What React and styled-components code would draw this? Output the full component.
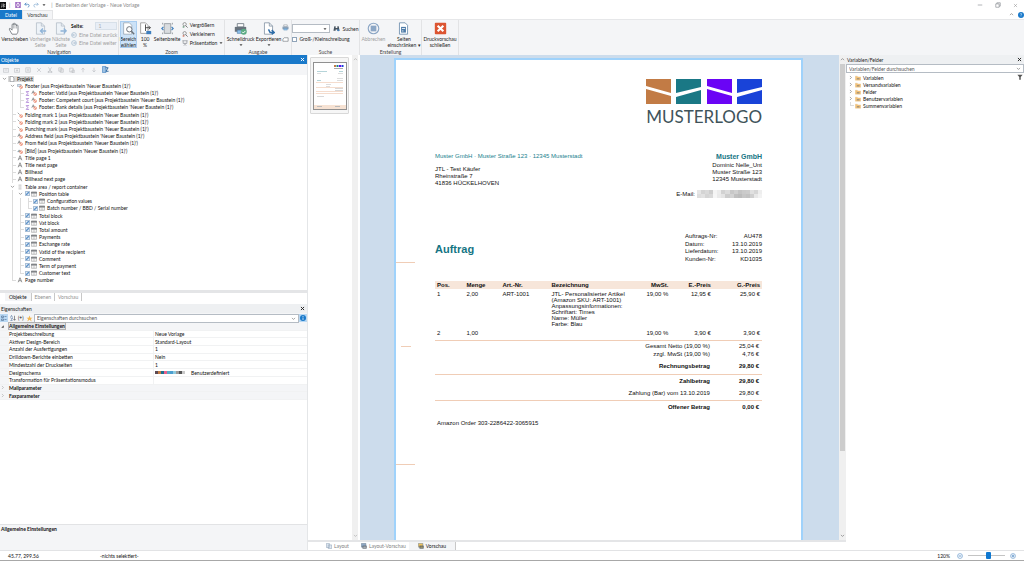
import React from "react";
import styled, { createGlobalStyle } from "styled-components";

const GlobalStyle = createGlobalStyle`
  * {
    box-sizing: border-box;
  }
  body {
    margin: 0;
    background: #ffffff;
    color: #111111;
    font-family: Lato, "Open Sans", sans-serif;
    font-size: 5px;
    line-height: 6px;
  }
  button, input, select {
    font: inherit;
    color: inherit;
    margin: 0;
    padding: 0;
    border: 0;
    background: none;
    border-radius: 0;
  }
  ul {
    list-style: none;
    margin: 0;
    padding: 0;
  }
  svg {
    display: block;
    flex: none;
  }
`;

const Window = styled.div`
  height: 100vh;
  display: flex;
  flex-direction: column;
  overflow: hidden;
`;

const TitleBar = styled.header`
  height: 10px;
  display: flex;
  align-items: center;
  gap: 3px;
  color: #8a8a8a;
`;

const QuickAccess = styled.div`
  display: flex;
  align-items: center;
  gap: 3px;
  padding: 0 2px;
`;

const IconButton = styled.button`
  display: flex;
  align-items: center;
  justify-content: center;
  opacity: ${(p) => (p.disabled ? 0.5 : 1)};
`;

const Spacer = styled.div`
  flex: 1;
`;

const WindowButtons = styled.div`
  display: flex;
  gap: 12px;
  padding-right: 6px;
`;

const TabBar = styled.nav`
  height: 9px;
  display: flex;
  align-items: stretch;
`;

const RibbonTab = styled.button`
  width: ${(p) => (p.$file ? 22 : 31)}px;
  color: ${(p) => (p.$file ? "#ffffff" : "#333333")};
  background: ${(p) => (p.$file ? "#1979ca" : "#f4f5f7")};
  border: ${(p) => (p.$file ? "0" : "1px solid #e3e4e6")};
  border-bottom: 0;
`;

const TabTools = styled.div`
  display: flex;
  align-items: center;
  gap: 4px;
`;

const Ribbon = styled.div`
  height: 36px;
  flex: none;
  display: flex;
  background: #f4f5f7;
  border-top: 1px solid #e6e7e9;
`;

const Group = styled.section`
  width: ${(p) => p.$width}px;
  display: flex;
  flex-direction: column;
  justify-content: space-between;
  border-right: 1px solid #e2e3e5;
`;

const GroupBody = styled.div`
  display: flex;
  justify-content: center;
  padding-top: 1px;
  gap: 1px;
`;

const GroupLabel = styled.div`
  text-align: center;
  color: #444444;
`;

const BigButton = styled.button`
  min-width: ${(p) => p.$width}px;
  height: 27px;
  display: flex;
  flex-direction: column;
  align-items: center;
  gap: 1px;
  padding-top: 1px;
  white-space: pre;
  text-align: center;
  color: ${(p) => (p.disabled ? "#a0a0a0" : "#222222")};
  background: ${(p) => (p.$active ? "#cce2f7" : "none")};
  outline: ${(p) => (p.$active ? "1px solid #a9cdf0" : "none")};
  outline-offset: -1px;
`;

const Stack = styled.div`
  display: flex;
  flex-direction: column;
  gap: ${(p) => p.$gap || 3}px;
  padding-top: ${(p) => p.$top || 0}px;
`;

const SmallButton = styled.button`
  display: flex;
  align-items: center;
  gap: 2px;
  white-space: nowrap;
  color: ${(p) => (p.disabled ? "#a0a0a0" : "#222222")};
`;

const Field = styled.label`
  display: flex;
  align-items: center;
  justify-content: space-between;
  font-weight: ${(p) => (p.$strong ? 700 : 400)};
  gap: 3px;
`;

const PageSelect = styled.select`
  width: 22px;
  height: 8px;
  appearance: none;
  padding-left: 2px;
  color: #8a8a8a;
  font-weight: 400;
  background: #e3ecf6;
  border: 1px solid #ccd8e4;
`;

const SearchCombo = styled.div`
  width: ${(p) => (p.$wide ? "100%" : "38px")};
  height: 9px;
  flex: ${(p) => (p.$wide ? "1" : "none")};
  display: flex;
  align-items: center;
  background: #ffffff;
  border: 1px solid #b5bcc4;
  padding: 0 2px;

  input {
    width: 100%;
    min-width: 0;
    height: 7px;
    outline: none;
  }
  input::placeholder {
    color: #555555;
    opacity: 1;
  }
`;

const Check = styled.input.attrs({ type: "checkbox" })`
  appearance: none;
  width: 5px;
  height: 5px;
  flex: none;
  border: 1px solid #8fa3b8;
  background: #ffffff;

  &:checked {
    border-color: #a9bfd6;
    background: linear-gradient(135deg, #ffffff 10%, #5d93ca 50%, #ffffff 90%);
  }
`;

const Workspace = styled.main`
  flex: 1;
  min-height: 0;
  display: grid;
  grid-template-columns: 154fr 269fr 89fr;
`;

const SidePanel = styled.aside`
  display: flex;
  flex-direction: column;
  min-width: 0;
  min-height: 0;
  border-right: ${(p) => (p.$last ? "0" : "1px solid #e4e6e8")};
`;

const PanelHeader = styled.div`
  height: 9px;
  flex: none;
  display: flex;
  align-items: center;
  justify-content: space-between;
  padding: 0 2px 0 1px;
  color: ${(p) => (p.$active ? "#ffffff" : "#222222")};
  background: ${(p) => (p.$active ? "#1979ca" : "#eef0f2")};
`;

const Toolbar = styled.div`
  height: 11px;
  flex: none;
  display: flex;
  align-items: center;
  gap: 5px;
  padding-left: 3px;
  background: #f4f5f7;
`;

const Tree = styled.ul`
  height: 209px;
  display: grid;
  grid-auto-rows: 1fr;
`;

const FieldTree = styled.ul`
  display: grid;
  flex: 1;
  grid-auto-rows: 7px;
  align-content: start;
  padding-top: 1px;
`;

const FilterButton = styled(IconButton)`
  align-self: flex-start;
  height: 8px;
  padding-right: 1px;
`;

const TreeRow = styled.li`
  display: flex;
  align-items: center;
  padding-left: ${(p) => (p.$root ? 0 : 8)}px;
  white-space: nowrap;
`;

const TreeLabel = styled.label`
  display: flex;
  align-items: center;
  gap: 2px;
  padding: 0 1px;
  background: ${(p) => (p.$selected ? "#d9d9d9" : "none")};
`;

const TreeIcons = styled.span`
  display: flex;
  align-items: center;
  gap: 1px;
`;

const Guide = styled.span`
  width: 8px;
  align-self: stretch;
  flex: none;
  display: grid;
  place-items: center;
  background-image: ${(p) =>
    p.$kind === "v"
      ? "none"
      : "linear-gradient(#dcdcdc, #dcdcdc), linear-gradient(#dcdcdc, #dcdcdc)"};
  background-repeat: no-repeat;
  background-position: 4px 0, 4px 50%;
  background-size: 1px ${(p) => (p.$kind === "L" ? "50%" : "100%")},
    ${(p) => (p.$kind === "|" ? 0 : 4)}px 1px;
`;

const Splitter = styled.div`
  height: 3px;
  flex: none;
  background: #e4e5e7;
`;

const PanelTabs = styled.div`
  height: 11px;
  flex: none;
  display: flex;
  align-items: flex-start;
  padding-left: 5px;
`;

const PanelTab = styled.button`
  height: 8px;
  padding: 0 ${(p) => (p.$active ? 4 : 3)}px;
  color: ${(p) => (p.$active ? "#111111" : "#8f8f8f")};
  background: ${(p) => (p.$active ? "#f4f5f7" : "none")};
  border-right: 1px solid #c8c8c8;
`;

const SearchRow = styled.div`
  height: ${(p) => (p.$tall ? 10 : 9)}px;
  flex: none;
  display: flex;
  align-items: center;
  background: #f4f5f7;
`;

const SearchTools = styled.div`
  width: 34px;
  display: flex;
  align-items: center;
  gap: 2px;
`;

const PropertyArea = styled.div`
  height: 246px;
  flex: none;
  display: flex;
  flex-direction: column;
`;

const PropertyTable = styled.table`
  width: 100%;
  height: 77px;
  flex: none;
  border-collapse: collapse;

  th, td {
    padding: 0;
    text-align: left;
    font-weight: 400;
    border-bottom: 1px solid #f1f2f3;
    line-height: 6px;
  }
  th:first-child {
    width: 9px;
    background: #f4f5f7;
  }
  td {
    width: 50%;
    padding-left: 1px;
    border-left: 1px solid #f1f2f3;
  }
`;

const CategoryRow = styled.tr`
  background: #f4f5f7;

  && th {
    font-weight: 700;
  }
  span {
    outline: ${(p) => (p.$selected ? "1px solid #b0b0b0" : "none")};
    background: ${(p) => (p.$selected ? "#e1e3e5" : "none")};
  }
`;

const Scheme = styled.span`
  display: flex;
  align-items: center;
  gap: 6px;
`;

const Swatches = styled.span`
  display: flex;
`;

const Swatch = styled.i`
  width: 3px;
  height: 3px;
  background: ${(p) => p.$color};
`;

const Description = styled.div`
  height: 26px;
  flex: none;
  padding: 1px;
  font-weight: 700;
  background: #f4f5f7;
  border-top: 1px solid #e2e3e5;
`;

const Center = styled.section`
  display: flex;
  flex-direction: column;
  min-width: 0;
  min-height: 0;
`;

const Preview = styled.div`
  flex: 1;
  min-height: 0;
  display: flex;
  overflow: hidden;
`;

const Thumbnails = styled.div`
  width: 44px;
  padding: 2px 2px 0 2px;
`;

const Thumbnail = styled.button`
  width: 39px;
  height: 57px;
  display: grid;
  place-items: center;
  background: #f6f6f6;
  border: 1px solid #d8d8d8;
  border-radius: 1px;
`;

const ScrollTrack = styled.div`
  width: ${(p) => (p.$wide ? 7 : 6)}px;
  flex: none;
  display: flex;
  flex-direction: column;
  align-items: center;
  gap: 2px;
  padding: 2px 1px;
  background: #f0f0f0;
`;

const ScrollThumb = styled.div`
  flex: 1;
  width: 100%;
  background: ${(p) => (p.$shown ? "#cdcdcd" : "transparent")};
  margin-bottom: ${(p) => (p.$shown ? "80px" : "0")};
`;

const Canvas = styled.div`
  flex: 1;
  margin-left: 2px;
  padding: 3px 36px 0 34px;
  background: #ccdcec;
  display: flex;
`;

const Paper = styled.article`
  flex: 1;
  display: flex;
  background: #ffffff;
  border: 2px solid #9fd2fb;
  border-bottom: 0;
  padding-right: 39px;
  font-family: "Liberation Sans", Arial, sans-serif;
  font-size: 6px;
  line-height: 7px;
`;

const MarginMarks = styled.div`
  width: 39px;
  flex: none;
  padding-top: 202px;
`;

const Mark = styled.div`
  width: ${(p) => (p.$short ? 10 : 19)}px;
  height: 1px;
  margin: 0 0 ${(p) => p.$space || 0}px ${(p) => (p.$short ? 5 : 0)}px;
  background: #f0cdb6;
`;

const Sheet = styled.div`
  flex: 1;
  min-width: 0;
  padding-top: 19px;
`;

const Logo = styled.div`
  display: flex;
  flex-direction: column;
  align-items: flex-end;
  gap: 4px;
  font-family: Lato, sans-serif;
  font-size: 17px;
  line-height: 17px;
  color: #40535a;
`;

const Columns = styled.div`
  display: flex;
  justify-content: space-between;
  margin-top: ${(p) => p.$top}px;
`;

const Address = styled.address`
  font-style: normal;
  text-align: ${(p) => (p.$right ? "right" : "left")};
`;

const Sender = styled.div`
  color: #1a7f8e;
  margin-bottom: 6px;
`;

const Company = styled.div`
  margin-bottom: 1px;
  font-size: 7px;
  font-weight: 700;
  line-height: 8px;
  color: #157584;
`;

const Mail = styled.div`
  display: flex;
  align-items: center;
  justify-content: flex-end;
  gap: 2px;
  margin-top: 7px;
`;

const Redacted = styled.span`
  width: 65px;
  height: 8px;
  display: grid;
  grid-template-columns: repeat(16, 1fr);
`;

const Pixel = styled.i`
  background: ${(p) => p.$color};
`;

const DocTitle = styled.h1`
  margin: 0;
  padding-top: 10px;
  font-size: 11px;
  line-height: 13px;
  color: #157584;
`;

const Meta = styled.dl`
  width: 77px;
  margin: 0;
  display: grid;
  grid-template-columns: 1fr auto;
  grid-template-rows: repeat(4, 1fr);
  height: 30px;

  dd {
    margin: 0;
    text-align: right;
  }
`;

const Items = styled.table`
  width: 100%;
  margin-top: 18px;
  border-collapse: collapse;
  table-layout: fixed;
  border-bottom: 1px solid #f0cdb6;
  line-height: 6px;

  th, td {
    padding: 1px 2px;
    text-align: left;
    vertical-align: top;
    white-space: pre;
  }
  th {
    background: #f7e6da;
  }
  th:nth-child(n + 5), td:nth-child(n + 5) {
    text-align: right;
  }
  td {
    padding-top: 2px;
  }
  tbody tr:last-child td {
    padding-bottom: 4px;
  }
  th:nth-child(1) { width: 9%; }
  th:nth-child(2) { width: 11%; }
  th:nth-child(3) { width: 15%; }
  th:nth-child(4) { width: 23%; }
  th:nth-child(5) { width: 14%; }
  th:nth-child(6) { width: 13%; }
`;

const Totals = styled.table`
  width: 100%;
  border-spacing: 0;
  border-bottom: ${(p) => (p.$last ? "0" : "1px solid #f0cdb6")};

  td {
    height: 8px;
    padding: 0 3px 0 0;
    text-align: right;
  }
  td:last-child {
    width: 15%;
  }
  tr.net td {
    height: 9px;
    vertical-align: bottom;
  }
  tr.sum td {
    height: ${(p) => p.$sum}px;
    font-weight: 700;
  }
  tr.payment td {
    height: 12px;
    padding-top: 2px;
    vertical-align: top;
  }
`;

const Note = styled.p`
  margin: 6px 2px;
`;

const ViewTabs = styled.div`
  height: 10px;
  flex: none;
  display: flex;
  align-items: stretch;
  padding: 0 0 0 15px;
  border-top: 2px solid #e4e5e7;
`;

const ViewTab = styled.button`
  display: flex;
  align-items: center;
  gap: 2px;
  padding: 0 ${(p) => (p.$active ? 9 : 3)}px;
  margin-right: ${(p) => (p.$wide ? 6 : 0)}px;
  color: ${(p) => (p.$active ? "#111111" : "#808080")};
  background: ${(p) => (p.$active ? "#f4f5f7" : "none")};
  border-right: ${(p) => (p.$active ? "1px solid #c8c8c8" : "0")};
`;

const StatusBar = styled.footer`
  height: 11px;
  flex: none;
  display: flex;
  align-items: center;
  border-top: 1px solid #e2e3e5;
  border-bottom: 1px solid #a8a8a8;
`;

const StatusText = styled.div`
  width: ${(p) => p.$width}px;
  padding-left: 8px;
`;

const Zoom = styled.label`
  display: flex;
  align-items: center;
  gap: 5px;
  padding-right: 8px;

  span {
    padding-right: 2px;
  }
`;

const ZoomSlider = styled.input.attrs({ type: "range" })`
  appearance: none;
  width: 37px;
  height: 7px;

  &::-webkit-slider-runnable-track {
    height: 1px;
    background: #c4c4c4;
  }
  &::-webkit-slider-thumb {
    appearance: none;
    width: 5px;
    height: 7px;
    margin-top: -3px;
    background: #0f78d0;
    border-radius: 1px;
  }
`;

const Svg = ({ size = 6, width, children, box = 16 }) => (
  <svg
    width={width || size}
    height={size}
    viewBox={`0 0 ${box} ${box}`}
    fill="none"
    stroke="#6b7178"
    strokeWidth="1.4"
    aria-hidden="true"
  >
    {children}
  </svg>
);

const Chevron = ({ dir = "down", color = "#707070" }) => {
  const paths = { down: "M3 6l5 5 5-5", up: "M3 10l5-5 5 5", right: "M6 3l5 5-5 5" };
  return (
    <Svg size={5}>
      <path d={paths[dir]} stroke={color} strokeWidth="2" />
    </Svg>
  );
};

const Caret = () => (
  <Svg size={4}>
    <path d="M2 5h12l-6 7z" fill="#444" stroke="none" />
  </Svg>
);

const Cross = ({ color = "#222", size = 5, bold = 3 }) => (
  <Svg size={size}>
    <path d="M3 3l10 10M13 3L3 13" stroke={color} strokeWidth={bold} />
  </Svg>
);

const Hand = () => (
  <Svg size={13}>
    <path
      d="M5 15L2 10c-1-2 0-3 1.500-1.500L5 10V3.500c0-1.300 1.600-1.300 1.600 0V2.500c0-1.500 1.900-1.500 1.900 0v1c0-1.500 1.900-1.400 1.900 0v1.200c0-1.300 1.900-1.200 1.900 0V11c0 2-1 3-1.500 4z"
      fill="#fff"
      strokeWidth="1"
    />
    <path d="M6.600 3.500V8M8.500 3v5M10.400 4v4" strokeWidth=".6" />
  </Svg>
);

const PageIcon = ({ arrow = "left", dim }) => (
  <Svg size={13}>
    <g opacity={dim ? 0.55 : 1}>
      <path d="M3 1h6l4 4v10H3z" fill={dim ? "#eaf2fa" : "#fff"} stroke="#8494a4" strokeWidth="1" />
      <path d="M9 1v4h4" stroke="#8494a4" strokeWidth="1" />
      {arrow === "left" && <path d="M15 11H8m3-3l-3 3 3 3" stroke="#3f7fbe" strokeWidth="1.700" />}
      {arrow === "right" && <path d="M8 11h7m-3-3l3 3-3 3" stroke="#3f7fbe" strokeWidth="1.700" />}
      {arrow === "export" && <path d="M8 9l2 4h5m-3-3l3 3-3 2" stroke="#2e6da8" strokeWidth="1.800" />}
    </g>
  </Svg>
);

const Magnifier = ({ size = 6, stroke = "#555", sign }) => (
  <Svg size={size}>
    <circle cx="7" cy="6" r="4.500" stroke={stroke} />
    <path d="M10 10l5 5" stroke={stroke} strokeWidth="2" />
    {sign && <circle cx="4" cy="13" r="2.500" fill={sign} stroke="none" />}
  </Svg>
);

const AreaIcon = () => (
  <Svg size={13}>
    <path d="M2 1h7l3 3v11H2z" fill="#fff" stroke="#8a98a5" strokeWidth=".8" />
    <circle cx="9" cy="9" r="3.300" fill="#fff" strokeWidth="1.200" />
    <path d="M11.500 11.500L15 15" strokeWidth="1.800" />
  </Svg>
);

const HundredIcon = () => (
  <Svg size={13}>
    <path d="M2 1h6l3 3v10H2z" fill="#fff" stroke="#888" strokeWidth=".9" />
    <path d="M8 7h6m-2-2l2 2-2 2M8 3v8" stroke="#333" strokeWidth="1" />
    <path d="M9 11h6v4H9z" fill="#3f7fbe" stroke="none" />
  </Svg>
);

const WidthIcon = () => (
  <Svg size={13}>
    <path d="M4 2h8v12H4z" fill="#d9dcdf" stroke="#90969c" strokeWidth="1" />
    <path d="M3 6L1 8l2 2M13 6l2 2-2 2" stroke="#3f7fbe" strokeWidth="1.500" />
    <path d="M2 1v2M14 1v2M2 13v2M14 13v2" strokeWidth=".8" />
  </Svg>
);

const PrinterIcon = ({ size = 13, check, light }) => (
  <Svg size={size}>
    <path d="M4 2h8v4H4z" fill="#fff" stroke="#68727c" strokeWidth="1" />
    <path d="M1 6h14v6H1z" fill={light ? "#8fa3b8" : "#68727c"} stroke="none" />
    <path d="M4 10h8v4H4z" fill="#8fc0ea" stroke="#4a7aa5" strokeWidth=".7" />
    {check && <circle cx="12" cy="12" r="3.700" fill="#5bab84" stroke="none" />}
    {check && <path d="M10 12l1.500 1.500L14 11" stroke="#fff" strokeWidth="1.200" />}
  </Svg>
);

const LayoutPreviewIcon = () => (
  <Svg>
    <path d="M1 1h12v10H1z" fill="#8fa9c6" stroke="#6f7f90" />
    <path d="M4 7h11v8H4z" fill="#5c6670" stroke="none" />
    <path d="M6 11h7" stroke="#fff" strokeWidth="2" />
  </Svg>
);

const PreviewIcon = () => (
  <Svg>
    <path d="M1 1h12v10H1z" fill="#f0c25c" stroke="#6f7f90" />
    <path d="M4 7h11v8H4z" fill="#4f5962" stroke="none" />
    <path d="M6 11h7" stroke="#f5d36a" strokeWidth="2" />
  </Svg>
);

const RoundIcon = ({ kind, size = 6, color = "#3f7fbe" }) => (
  <Svg size={size}>
    <circle cx="8" cy="8" r="6.500" stroke={color} />
    {kind === "left" && <path d="M12 8H4m3-3L4 8l3 3" stroke={color} />}
    {kind === "right" && <path d="M4 8h8M9 5l3 3-3 3" stroke={color} />}
    {kind === "plus" && <path d="M4.500 8h7M8 4.500v7" stroke={color} strokeWidth="2" />}
    {kind === "minus" && <path d="M4.500 8h7" stroke={color} strokeWidth="2" />}
    {kind === "stop" && <rect x="4.500" y="4.500" width="7" height="7" fill={color} stroke="none" />}
  </Svg>
);

const ScreenIcon = () => (
  <Svg>
    <path d="M1 2h14M3 2v7h10V2M8 9v3M5 15l3-3 3 3" />
  </Svg>
);

const Binoculars = () => (
  <Svg size={7}>
    <path d="M3 3h3v4h4V3h3l2 10h-5v-3H6v3H1z" fill="#46535f" stroke="none" />
    <circle cx="12" cy="12" r="2.500" fill="#3f7fbe" stroke="none" />
  </Svg>
);

const LimitIcon = () => (
  <Svg size={13}>
    <path d="M3 1h7l3 3v11H3z" fill="#fff" stroke="#6689aa" strokeWidth="1" />
    <path d="M5 6h6v7H5z" fill="#4d7ba8" stroke="none" />
    <path d="M6 8h4M6 11h2" stroke="#fff" strokeWidth="1" />
  </Svg>
);

const CloseIcon = () => (
  <Svg size={13}>
    <rect x="1" y="1" width="14" height="14" rx="1" fill="#dc5532" stroke="none" />
    <path d="M4.500 4.500l7 7M11.500 4.500l-7 7" stroke="#fff" strokeWidth="2.600" />
  </Svg>
);

const TreeIcon = ({ kind }) => {
  const blocked = (
    <g stroke="#e5613f" strokeWidth="1.500">
      <circle cx="11" cy="11" r="3.700" fill="#fff" />
      <path d="M8.500 8.500l5 5" />
    </g>
  );
  return (
    <Svg size={kind === "sigma" ? 5 : 6}>
      {kind === "doc" && <path d="M3 1h6l4 4v10H3z" fill="#fff" />}
      {kind === "A" && <path d="M3 14L8 2l5 12M5 10h6" stroke="#555" strokeWidth="1.600" />}
      {kind === "text" && <path d="M2 10L6 2l3 6M4 7h4" stroke="#555" />}
      {kind === "line" && <path d="M2 2l5 5" stroke="#555" />}
      {kind === "group" && <path d="M1 4h10v5H1z" fill="#dfe7ef" stroke="#7892ab" />}
      {kind === "image" && <path d="M2 10l4-5 4 4z" fill="#e2ad54" stroke="#5588bb" />}
      {["text", "line", "group", "image"].includes(kind) && blocked}
      {kind === "container" && <path d="M4 3h8M4 8h8M4 13h8" stroke="#888" />}
      {kind === "table" && (
        <g>
          <path d="M1 3h14v11H1z" fill="#fff" stroke="#888" />
          <path d="M1 3h14v3H1z" fill="#888" />
          <path d="M6 6v8M10 6v8" stroke="#aaa" />
        </g>
      )}
      {kind === "sigma" && <path d="M13 2H4l5 6-5 6h9" stroke="#8a4fc4" strokeWidth="2" />}
      {kind === "folder" && (
        <g>
          <path d="M1 3h5l2 2h7v9H1z" fill="#f2c27a" stroke="#dca658" strokeWidth=".6" />
          <path d="M5 8h7v4H5z" fill="#a8967a" stroke="none" />
        </g>
      )}
    </Svg>
  );
};

const MiniPage = () => (
  <svg width="34" height="48" viewBox="0 0 34 48">
    <rect x=".5" y=".5" width="33" height="47" fill="#fff" stroke="#909090" />
    <path d="M21 3h2v2h-2z" fill="#c27b45" />
    <path d="M23.500 3h2v2h-2z" fill="#1a7f8e" />
    <path d="M26 3h2v2h-2z" fill="#6a04f5" />
    <path d="M28.500 3h2v2h-2z" fill="#1943d8" />
    <path d="M21 6.500h9" stroke="#aaa" />
    <path d="M4 9.500h10M4 18.500h4M26 9.500h4" stroke="#b5d4d9" />
    <path d="M4 11.500h4M25 11.500h5M24 16.500h6M24 18.500h6M13 22.500h5M13 24.500h4" stroke="#ddd" />
    <path d="M3 20.500h27M3 25.500h27M3 29.500h27M3 31.500h27" stroke="#f5ddce" />
    <path d="M22 26.500h8M22 28.500h8M4 34.500h7" stroke="#d8d8d8" />
    <path d="M1 43h32v4H1z" fill="#f6e2d3" />
    <path d="M4 44.500h5M22 44.500h5" stroke="#bbb" />
  </svg>
);

const LogoMark = () => (
  <svg width="116" height="25" viewBox="0 0 116 25">
    <path fill="#c27b45" d="M0 0h25v14L0 7zM0 10l25 7v8H0z" />
    <path fill="#1a7885" d="M30 0h25v8l-25 6zM30 18l25-7v14H30z" />
    <path fill="#6a04f5" d="M61 0h25v14L61 7zM61 10l25 7v8H61z" />
    <path fill="#1943d8" d="M91 0h25v8l-25 6zM91 18l25-7v14H91z" />
  </svg>
);

const brick = "(aus Projektbaustein 'Neuer Baustein (1)')";

const objects = [
  ["v", "doc", "Projekt"],
  ["v", "group", `Footer ${brick}`],
  ["|+", "text", `Footer: VatId ${brick}`, "sigma"],
  ["|+", "text", `Footer: Competent court ${brick}`, "sigma"],
  ["|L", "text", `Footer: Bank details ${brick}`, "sigma"],
  ["+", "line", `Folding mark 1 ${brick}`],
  ["+", "line", `Folding mark 2 ${brick}`],
  ["+", "line", `Punching mark ${brick}`],
  ["+", "text", `Address field ${brick}`],
  ["+", "text", `From field ${brick}`],
  ["+", "image", `[Bild] ${brick}`],
  ["+", "A", "Title page 1"],
  ["+", "A", "Title next page"],
  ["+", "A", "Billhead"],
  ["+", "A", "Billhead next page"],
  ["v", "container", "Table area / report container"],
  ["|v", "table", "Position table", "check"],
  ["||+", "table", "Configuration values", "check"],
  ["||L", "table", "Batch number / BBD / Serial number", "check"],
  ["|+", "table", "Total block", "check"],
  ["|+", "table", "Vat block", "check"],
  ["|+", "table", "Total amount", "check"],
  ["|+", "table", "Payments", "check"],
  ["|+", "table", "Exchange rate", "check"],
  ["|+", "table", "VatId of the recipient", "check"],
  ["|+", "table", "Comment", "check"],
  ["|+", "table", "Term of payment", "check"],
  ["|L", "table", "Customer text", "check"],
  ["L", "A", "Page number"],
];

const properties = [
  ["Projektbeschreibung", "Neue Vorlage"],
  ["Aktiver Design-Bereich", "Standard-Layout"],
  ["Anzahl der Ausfertigungen", "1"],
  ["Drilldown-Berichte einbetten", "Nein"],
  ["Mindestzahl der Druckseiten", "1"],
  ["Designschema", null],
  ["Transformation für Präsentationsmodus", ""],
];

const schemeColors = ["#5c4a52", "#c27b45", "#1a6f8e", "#e8608a", "#55a8c8", "#4b9fd0", "#8fcbe0", "#9a9a9a", "#555555", "#c9c9c9"];

const fields = ["Variablen", "Versandvariablen", "Felder", "Benutzervariablen", "Summenvariablen"];

const redaction = [
  "#e6e6e6", "#d4d4d4", "#dadada", "#cecece", "#f4f4f4", "#ececec", "#d2d2d2", "#dcdcdc",
  "#c8c8c8", "#d0d0d0", "#c4c4c4", "#cacaca", "#cccccc", "#e0e0e0", "#d6d6d6", "#eeeeee",
  "#dedede", "#e2e2e2", "#d5d5d5", "#d9d9d9", "#f6f6f6", "#eaeaea", "#e4e4e4", "#cdcdcd",
  "#d3d3d3", "#c0c0c0", "#bcbcbc", "#c6c6c6", "#c2c2c2", "#cfcfcf", "#e8e8e8", "#f2f2f2",
];

const description = `JTL- Personalisierter Artikel
(Amazon SKU: ART-1001)
Anpassungsinformationen:
Schriftart: Times
Name: Müller
Farbe: Blau`;

const Header = () => (
  <>
    <TitleBar>
      <svg width="6" height="7" viewBox="0 0 12 14">
        <path d="M0 0h12v14H0z" fill="#111" />
        <path d="M4 3v7H2M7 3v8M10 4l-2 3 2 3" stroke="#fff" fill="none" />
      </svg>
      <span>|</span>
      <QuickAccess>
        <IconButton aria-label="Speichern">
          <Svg>
            <path d="M1 1h14v14H1zM4 1v5h8V1M4 15v-5h8v5" stroke="#8b4fb5" strokeWidth="2" />
          </Svg>
        </IconButton>
        <IconButton aria-label="Rückgängig">
          <Svg>
            <path d="M6 2L2 6l4 4M2 6h8c5 0 5 7 0 8" stroke="#3f7fbe" strokeWidth="2" />
          </Svg>
        </IconButton>
        <IconButton aria-label="Wiederholen">
          <Svg>
            <path d="M10 2l4 4-4 4M14 6H6c-5 0-5 7 0 8" stroke="#8eb2d4" strokeWidth="2" />
          </Svg>
        </IconButton>
        <Caret />
      </QuickAccess>
      <span>|</span>
      <span>Bearbeiten der Vorlage - Neue Vorlage</span>
      <Spacer />
      <WindowButtons>
        <IconButton aria-label="Minimieren">
          <Svg>
            <path d="M2 8h12" />
          </Svg>
        </IconButton>
        <IconButton aria-label="Wiederherstellen">
          <Svg>
            <path d="M2 5h9v9H2zM5 5V2h9v9h-3" />
          </Svg>
        </IconButton>
        <IconButton aria-label="Schließen">
          <Cross color="#888" bold={1.5} />
        </IconButton>
      </WindowButtons>
    </TitleBar>
    <TabBar>
      <RibbonTab $file>Datei</RibbonTab>
      <RibbonTab>Vorschau</RibbonTab>
      <Spacer />
      <TabTools>
        <Chevron dir="up" />
        <IconButton aria-label="Hilfe">
          <Svg>
            <circle cx="8" cy="8" r="8" fill="#1979ca" stroke="none" />
            <path d="M6 6c0-3 5-2 4 0l-2 2v2M8 12v1" stroke="#fff" />
          </Svg>
        </IconButton>
      </TabTools>
    </TabBar>
  </>
);

const RibbonArea = () => (
  <Ribbon>
    <Group $width={119}>
      <GroupBody>
        <BigButton $width={28}>
          <Hand />
          Verschieben
        </BigButton>
        <BigButton $width={20} disabled>
          <PageIcon dim />
          {"Vorherige\nSeite"}
        </BigButton>
        <BigButton $width={18} disabled>
          <PageIcon dim arrow="right" />
          {"Nächste\nSeite"}
        </BigButton>
        <Stack $gap={2} $top={1}>
          <Field $strong>
            Seite:
            <PageSelect disabled defaultValue="1">
              <option>1</option>
            </PageSelect>
          </Field>
          <SmallButton disabled>
            <RoundIcon kind="left" color="#8aa6c2" />
            Eine Datei zurück
          </SmallButton>
          <SmallButton disabled>
            <RoundIcon kind="right" color="#8aa6c2" />
            Eine Datei weiter
          </SmallButton>
        </Stack>
      </GroupBody>
      <GroupLabel>Navigation</GroupLabel>
    </Group>
    <Group $width={106}>
      <GroupBody>
        <BigButton $width={17} $active>
          <AreaIcon />
          {"Bereich\nwählen"}
        </BigButton>
        <BigButton $width={15}>
          <HundredIcon />
          {"100\n%"}
        </BigButton>
        <BigButton $width={27}>
          <WidthIcon />
          Seitenbreite
        </BigButton>
        <Stack $top={1}>
          <SmallButton>
            <Magnifier sign="#7aa58c" />
            Vergrößern
          </SmallButton>
          <SmallButton>
            <Magnifier sign="#d08070" />
            Verkleinern
          </SmallButton>
          <SmallButton>
            <ScreenIcon />
            Präsentation
            <Caret />
          </SmallButton>
        </Stack>
      </GroupBody>
      <GroupLabel>Zoom</GroupLabel>
    </Group>
    <Group $width={67}>
      <GroupBody>
        <BigButton $width={27}>
          <PrinterIcon check />
          Schnelldruck
          <Caret />
        </BigButton>
        <BigButton $width={25}>
          <PageIcon arrow="export" />
          Exportieren
          <Caret />
        </BigButton>
        <Stack $gap={5} $top={3}>
          <IconButton aria-label="Drucken">
            <PrinterIcon size={7} light />
          </IconButton>
          <IconButton aria-label="Senden">
            <Svg size={7}>
              <path d="M2 12V7l3-3h9v8z" fill="#fff" />
            </Svg>
          </IconButton>
        </Stack>
      </GroupBody>
      <GroupLabel>Ausgabe</GroupLabel>
    </Group>
    <Group $width={68}>
      <GroupBody>
        <Stack $top={3}>
          <Field>
            <SearchCombo>
              <input aria-label="Suchtext" />
              <Caret />
            </SearchCombo>
            <SmallButton>
              <Binoculars />
              Suchen
            </SmallButton>
          </Field>
          <SmallButton as="label">
            <Check />
            Groß-/Kleinschreibung
          </SmallButton>
        </Stack>
      </GroupBody>
      <GroupLabel>Suche</GroupLabel>
    </Group>
    <Group $width={62}>
      <GroupBody>
        <BigButton $width={26} disabled>
          <RoundIcon kind="stop" size={13} color="#8ba6c5" />
          Abbrechen
        </BigButton>
        <BigButton $width={33}>
          <LimitIcon />
          {"Seiten\neinschränken ▾"}
        </BigButton>
      </GroupBody>
      <GroupLabel>Erstellung</GroupLabel>
    </Group>
    <Group $width={37}>
      <GroupBody>
        <BigButton $width={34}>
          <CloseIcon />
          {"Druckvorschau\nschließen"}
        </BigButton>
      </GroupBody>
    </Group>
  </Ribbon>
);

const ObjectRow = ({ guides, kind, text, extra }) => (
  <TreeRow $root={kind === "doc"}>
    {guides.split("").map((g, i) => (
      <Guide key={i} $kind={g}>
        {g === "v" && <Chevron />}
      </Guide>
    ))}
    <TreeLabel $selected={kind === "doc"}>
      <TreeIcons>
        {extra === "check" && <Check defaultChecked />}
        {extra === "sigma" && <TreeIcon kind="sigma" />}
        <TreeIcon kind={kind} />
      </TreeIcons>
      {text}
    </TreeLabel>
  </TreeRow>
);

const toolbarPaths = [
  "M1 4h14v10H1zM4 8h8",
  "M1 4h14v10H1zM8 6v6M5 9h6",
  "M2 2h12v12H2zM5 6h6M5 10h6",
  "M3 3l10 10M13 3L3 13",
  "M4 1l7 11M12 1L5 12M3 12h3v3H3zM10 12h3v3h-3z",
  "M2 2h8v9H2zM6 5h8v9H6z",
  "M2 3h9v10H2zM8 8h6v7H8z",
  "M8 14V3M4 7l4-4 4 4",
  "M8 2v11M4 9l4 4 4-4",
];

const Properties = () => (
  <PropertyArea>
    <PanelHeader>
      Eigenschaften
      <IconButton aria-label="Eigenschaften schließen">
        <Cross />
      </IconButton>
    </PanelHeader>
    <SearchRow $tall>
      <SearchTools>
        <Svg size={8}>
          <path d="M0 0h16v16H0z" fill="#b9d8f3" stroke="none" />
          <path d="M3 4h4v3H3zM3 10h4v3H3zM9 5h4M9 11h4" stroke="#57779a" />
        </Svg>
        <Svg>
          <path d="M1 7l3-6 3 6M2 9h5l-5 6h5" stroke="#3a5f94" />
          <path d="M12 2v12M9 11l3 3 3-3" stroke="#333" />
        </Svg>
        (+)
        <Svg size={7}>
          <path d="M8 1l2 5h5l-4 3 2 6-5-4-5 4 2-6-4-3h5z" fill="#f2b64e" stroke="none" />
        </Svg>
      </SearchTools>
      <SearchCombo $wide>
        <input placeholder="Eigenschaften durchsuchen" aria-label="Eigenschaften durchsuchen" />
        <Chevron />
      </SearchCombo>
      <IconButton aria-label="Info">
        <Svg size={8}>
          <path d="M0 0h16v16H0z" fill="#b9d8f3" stroke="none" />
          <circle cx="8" cy="8" r="6" fill="#1979ca" stroke="none" />
          <path d="M8 4v2M8 7v5" stroke="#fff" />
        </Svg>
      </IconButton>
    </SearchRow>
    <PropertyTable>
      <tbody>
        <CategoryRow $selected>
          <th>
            <Svg size={5}>
              <path d="M12 4v8H4z" fill="#444" stroke="none" />
            </Svg>
          </th>
          <th colSpan="2">
            <span>Allgemeine Einstellungen</span>
          </th>
        </CategoryRow>
        {properties.map(([name, value]) => (
          <tr key={name}>
            <th />
            <th scope="row">{name}</th>
            <td>
              {value === null ? (
                <Scheme>
                  <Swatches>
                    {schemeColors.map((c) => (
                      <Swatch key={c} $color={c} />
                    ))}
                  </Swatches>
                  Benutzerdefiniert
                </Scheme>
              ) : (
                value
              )}
            </td>
          </tr>
        ))}
        {["Mailparameter", "Faxparameter"].map((name) => (
          <CategoryRow key={name}>
            <th>
              <Chevron dir="right" color="#aaa" />
            </th>
            <th colSpan="2">
              <span>{name}</span>
            </th>
          </CategoryRow>
        ))}
      </tbody>
    </PropertyTable>
    <Spacer />
    <Description>Allgemeine Einstellungen</Description>
  </PropertyArea>
);

const LeftPanel = () => (
  <SidePanel>
    <PanelHeader $active>
      Objekte
      <IconButton aria-label="Objekte schließen">
        <Cross color="#fff" />
      </IconButton>
    </PanelHeader>
    <Toolbar>
      {toolbarPaths.map((d) => (
        <IconButton key={d} disabled aria-label="Werkzeug">
          <Svg>
            <path d={d} />
          </Svg>
        </IconButton>
      ))}
      <IconButton aria-label="Sortieren">
        <Svg size={7}>
          <path d="M1 1h8v14H1z" fill="#9cc1e4" stroke="#3f7fbe" />
          <path d="M8 4h6l-5 8h6" stroke="#225f9a" strokeWidth="2" />
        </Svg>
      </IconButton>
    </Toolbar>
    <Tree>
      {objects.map(([guides, kind, text, extra]) => (
        <ObjectRow key={text} guides={guides} kind={kind} text={text} extra={extra} />
      ))}
    </Tree>
    <Spacer />
    <Splitter />
    <PanelTabs>
      <PanelTab $active>Objekte</PanelTab>
      <PanelTab>Ebenen</PanelTab>
      <PanelTab>Vorschau</PanelTab>
    </PanelTabs>
    <Properties />
  </SidePanel>
);

const Letter = () => (
  <Paper>
    <MarginMarks>
      <Mark $space={83} />
      <Mark $short $space={117} />
      <Mark />
    </MarginMarks>
    <Sheet>
      <Logo>
        <LogoMark />
        MUSTERLOGO
      </Logo>
      <Columns $top={28}>
        <Address>
          <Sender>Muster GmbH · Muster Straße 123 · 12345 Musterstadt</Sender>
          JTL - Test Käufer
          <br />
          Rheinstraße 7
          <br />
          41836 HÜCKELHOVEN
        </Address>
        <Address $right>
          <Company>Muster GmbH</Company>
          Dominic Nelle_Unt
          <br />
          Muster Straße 123
          <br />
          12345 Musterstadt
          <Mail>
            E-Mail:
            <Redacted>
              {redaction.map((c) => (
                <Pixel key={c} $color={c} />
              ))}
            </Redacted>
          </Mail>
        </Address>
      </Columns>
      <Columns $top={35}>
        <DocTitle>Auftrag</DocTitle>
        <Meta>
          <dt>Auftrags-Nr:</dt>
          <dd>AU478</dd>
          <dt>Datum:</dt>
          <dd>13.10.2019</dd>
          <dt>Lieferdatum:</dt>
          <dd>13.10.2019</dd>
          <dt>Kunden-Nr:</dt>
          <dd>KD1035</dd>
        </Meta>
      </Columns>
      <Items>
        <thead>
          <tr>
            <th>Pos.</th>
            <th>Menge</th>
            <th>Art.-Nr.</th>
            <th>Bezeichnung</th>
            <th>MwSt.</th>
            <th>E.-Preis</th>
            <th>G.-Preis</th>
          </tr>
        </thead>
        <tbody>
          <tr>
            <td>1</td>
            <td>2,00</td>
            <td>ART-1001</td>
            <td>{description}</td>
            <td>19,00 %</td>
            <td>12,95 €</td>
            <td>25,90 €</td>
          </tr>
          <tr>
            <td>2</td>
            <td>1,00</td>
            <td />
            <td />
            <td>19,00 %</td>
            <td>3,90 €</td>
            <td>3,90 €</td>
          </tr>
        </tbody>
      </Items>
      <Totals $sum={16}>
        <tbody>
          <tr className="net">
            <td>Gesamt Netto (19,00 %)</td>
            <td>25,04 €</td>
          </tr>
          <tr>
            <td>zzgl. MwSt (19,00 %)</td>
            <td>4,76 €</td>
          </tr>
          <tr className="sum">
            <td>Rechnungsbetrag</td>
            <td>29,80 €</td>
          </tr>
        </tbody>
      </Totals>
      <Totals $sum={13}>
        <tbody>
          <tr className="sum">
            <td>Zahlbetrag</td>
            <td>29,80 €</td>
          </tr>
          <tr className="payment">
            <td>Zahlung (Bar) vom 13.10.2019</td>
            <td>29,80 €</td>
          </tr>
        </tbody>
      </Totals>
      <Totals $sum={13} $last>
        <tbody>
          <tr className="sum">
            <td>Offener Betrag</td>
            <td>0,00 €</td>
          </tr>
        </tbody>
      </Totals>
      <Note>Amazon Order 303-2286422-3065915</Note>
    </Sheet>
  </Paper>
);

const App = () => {
  return (
    <Window>
      <GlobalStyle />
      <Header />
      <RibbonArea />
      <Workspace>
        <LeftPanel />
        <Center>
          <Preview>
            <Thumbnails>
              <Thumbnail aria-label="Seite 1">
                <MiniPage />
              </Thumbnail>
            </Thumbnails>
            <ScrollTrack>
              <Chevron dir="up" color="#aaa" />
              <ScrollThumb />
              <Chevron color="#aaa" />
            </ScrollTrack>
            <Canvas>
              <Letter />
            </Canvas>
            <ScrollTrack $wide>
              <Chevron dir="up" />
              <ScrollThumb $shown />
              <Chevron />
            </ScrollTrack>
          </Preview>
          <ViewTabs>
            <ViewTab $wide>
              <Svg>
                <path d="M1 1h8v11H1zM6 5h9v10H6z" fill="#dfe8f2" stroke="#8ba0b5" />
              </Svg>
              Layout
            </ViewTab>
            <ViewTab>
              <LayoutPreviewIcon />
              Layout-Vorschau
            </ViewTab>
            <ViewTab $active>
              <PreviewIcon />
              Vorschau
            </ViewTab>
          </ViewTabs>
        </Center>
        <SidePanel $last>
          <PanelHeader>
            Variablen/Felder
            <IconButton aria-label="Variablen schließen">
              <Cross />
            </IconButton>
          </PanelHeader>
          <SearchRow>
            <SearchCombo $wide>
              <input placeholder="Variablen/Felder durchsuchen" aria-label="Variablen/Felder durchsuchen" />
              <Chevron />
            </SearchCombo>
          </SearchRow>
          <Columns $top={0}>
            <FieldTree>
              {fields.map((name, i) => (
                <TreeRow key={name} $root>
                  <Guide $kind={i === 4 ? "L" : "v"}>{i < 4 && <Chevron dir="right" />}</Guide>
                  <TreeLabel>
                    <TreeIcon kind="folder" />
                    {name}
                  </TreeLabel>
                </TreeRow>
              ))}
            </FieldTree>
            <FilterButton aria-label="Filter">
              <Svg>
                <path d="M1 2h14l-5 6v7H6V8z" fill="#555" stroke="none" />
              </Svg>
            </FilterButton>
          </Columns>
        </SidePanel>
      </Workspace>
      <StatusBar>
        <StatusText $width={92}>45.77, 299.56</StatusText>
        <StatusText $width={80}>-nichts selektiert-</StatusText>
        <Spacer />
        <Zoom>
          <span>120%</span>
          <RoundIcon kind="minus" />
          <ZoomSlider defaultValue="55" />
          <RoundIcon kind="plus" />
        </Zoom>
      </StatusBar>
    </Window>
  );
};

export default App;
